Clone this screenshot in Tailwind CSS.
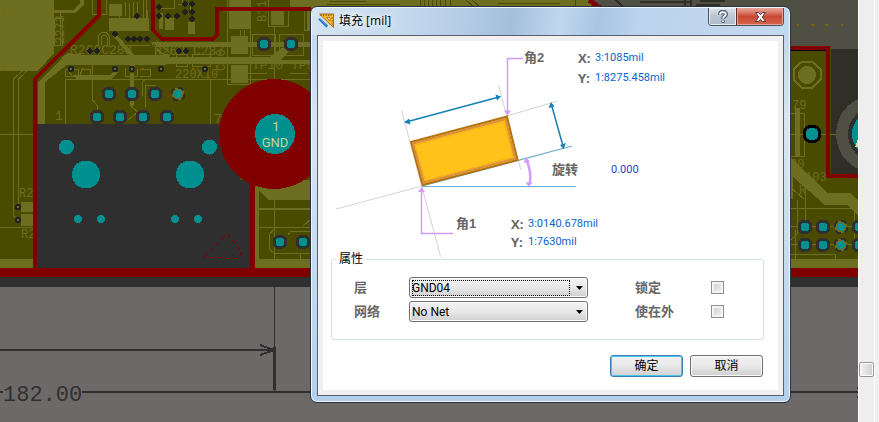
<!DOCTYPE html>
<html lang="zh-CN">
<head>
<meta charset="utf-8">
<meta name="viewport" content="width=device-width, initial-scale=1">
<title>填充 [mil]</title>
<script src="https://cdn.jsdelivr.net/npm/@tailwindcss/browser@4"></script>
</head>
<body class="flex min-h-screen overflow-hidden bg-[#6e6969] font-['Liberation_Sans','Noto_Sans_CJK_SC',sans-serif] text-[12px] text-black">
<main class="relative flex-1 overflow-hidden bg-[#6e6969]">
  <!-- board canvas -->
  <svg class="absolute inset-0 h-full w-full" viewBox="0 0 858 422" preserveAspectRatio="xMinYMin slice" role="img" aria-label="PCB" shape-rendering="crispEdges">
    <defs>
      <g id="via"><circle r="7.5" fill="#2f2f2f"/><circle r="4.5" fill="#009090"/></g>
      <g id="padvia"><circle r="6.5" fill="#6e6e20" stroke="#2f2f2f" stroke-dasharray="6 4" stroke-width="2"/><circle r="4" fill="#009090"/></g>
      <g id="svia"><circle r="2" fill="#6e6e20" stroke="#222" stroke-width="2"/></g>
      <circle id="dot" r="2.6" fill="#1f1f20"/>
    </defs>
    <rect width="858" height="268" fill="#4b4b00"/>
    <!-- copper pours and traces -->
    <g fill="#6e6e20">
      <path d="M0 0H54V53L38 71H0Z"/>
      <path d="M38 82L68 53 128 60H311V64H68L45 82V124H38Z"/>
      <rect x="109" y="4" width="13" height="12"/><rect x="109" y="18" width="40" height="13"/>
      <path d="M64 55H170L166 65H58Z"/><path d="M150 42H311V47H158Z"/><path d="M150 57H270L286 45 291 49 276 64H150Z"/>
      <path d="M118 36L135 56V68H130V56L113 36Z"/>
      <rect x="229" y="0" width="22" height="29"/><rect x="231" y="36" width="17" height="18"/><rect x="231" y="65" width="17" height="18"/>
      <rect x="271" y="8" width="13" height="17"/><rect x="307" y="0" width="4" height="30"/>
      <rect x="130" y="73" width="4" height="33"/><path d="M70 75H110L115 70 118 73 111 79H76L69 72Z"/>
      <path d="M54 10H74L80 3V0H84V4L76 13H54Z"/>
      <rect x="255" y="180" width="56" height="88"/><rect y="259" width="33" height="9"/>
      <rect x="21" y="203" width="12" height="9"/><rect x="21" y="214" width="12" height="12"/>
      <rect x="159" y="13" width="4" height="16"/><rect x="165" y="18" width="9" height="12"/><rect x="188" y="22" width="7" height="12"/>
      <rect x="274" y="237" width="13" height="11"/>
    </g>
    <path d="M259 191L268 200H311V259H259Z" fill="#4b4b00"/>
    <g fill="none" stroke="#6e6e20">
      <path d="M13.500 216V79L22 71M18.500 210V79L27 71M0 134.500H33M0 227.500H33M65.500 124V79.500H311M92.500 57V100L97 105V112M131.500 80V107L138 112L128 120M142 96V82L146 79H240M145 107V85H156M54.500 18V45H62V18ZM60 13V45M92 0V14H106V0M113 30H150M124 45H150"/>
      <path d="M111 18V31M115 18V31M119 16V31M123 18V31M127 18V31M131 18V31M135 18V31M139 18V31M143 0V31M146 0V31M147 10V31M125 2V16M129 3V20M133 2V16M137 2V16M137 10V28M152 44L166 57M156 40L171 54"/>
      <path d="M98 45V36L102 32H106L109 36V47M101 45V37L103 35H105L107 37V47M65 69V76H78V69ZM125 68V76H137V69M82 69H90V76H80ZM140 69H150V76H140M176 54H187V66H176ZM192 54H210V66H192ZM210 80V124"/>
      <path d="M227.500 0V84H250V0M252 34H275V55H252ZM279 34H303V55H279ZM304 0V30H311M268 0V26H288V8M240 30V36M244 30V36M274.500 26V79M247 73H267M290 73H308M290 62H311"/>
      <path d="M258 209H311" stroke-width="2"/><path d="M258 227.500H311M274.500 200V268M274 253H311M269 249V235L274 229M303 226L311 219M288 235L291 231H311M300 254V259M269 249L274 253"/>
      <path d="M21 202H33M13 216L20 219M160 8H174V0M178 4H190V12M182 4V0"/>
    </g>
    <g fill="#6e6e20" font-family="Liberation Mono, monospace">
      <text x="70" y="54" font-size="13">R268C288</text><text x="154" y="55" font-size="13">R268 C287</text>
      <text x="252" y="69" font-size="13">TP10 TP9</text><text x="55" y="120" font-size="13">1</text><text x="214" y="123" font-size="13">7</text>
      <text x="175" y="78" font-size="12">220X10</text><text x="19" y="197" font-size="12">R2</text><text x="21" y="238" font-size="12">R2</text>
      <text transform="translate(64 44) rotate(-90)" font-size="12">2273</text><text transform="translate(225 71) rotate(-90)" font-size="12">C10</text><text transform="translate(266 22) rotate(-90)" font-size="12">B11</text>
      <text transform="translate(225 13) rotate(-90)" font-size="12">2</text>
    </g>
    <path d="M3 10.500h2M49 10.500h2M3 66.500h2M37 66.500h2M82 68.500h2M142 68.500h2M192 68.500h2" stroke="#806000" stroke-width="2"/>
    <!-- strip along the top edge -->
    <rect x="290" width="303" height="8" fill="#6e6e20"/>
    <path d="M330 1H366M327 4H400M420 0V8M424 0V8M428 0V8M432 0V8M436 0V8M440 0V8M445 0V8M450 0V8M466 0L475 8M472 0L481 8M498 3H560M540 6H592M575 0V8" stroke="#4b4b00" fill="none"/>
    <path d="M592 0H858V49H592Z" fill="#4f4f44"/>
    <path d="M616 0L624 8M640 2H690M685 0V8M691 0V8M700 1H725M696 5H720" stroke="#2f2f27" stroke-width="2"/>
    <path d="M589 0L600 8" stroke="#800000" stroke-width="5"/>
    <!-- right section of the board -->
    <rect x="790" y="51" width="37" height="217" fill="#4b4b00"/>
    <path d="M790 50.500H826" stroke="#000"/>
    <rect x="831" y="49" width="27" height="125" fill="#2f2f27"/>
    <path d="M797 24.500h2M811 24.500h3M825 24.500h3M841 24.500h2" stroke="#806000" stroke-width="2"/>
    <path d="M802 61.500H812L820.500 69.500V79.500L812 88H802L793.500 79.500V69.500Z" fill="none" stroke="#6e6e20" stroke-width="2"/>
    <circle cx="807" cy="75" r="9" fill="#6e6e20"/>
    <g fill="#6e6e20">
      <rect x="795" y="108" width="5" height="48"/>
      <path d="M790 157L828 193H850L858 200V216L848 205H825L793 177V199H790Z"/>
      <rect x="790" y="259" width="68" height="9"/>
      <g font-family="Liberation Mono, monospace" font-size="12"><text x="792" y="109">79</text><text x="790" y="168">80</text><text x="805" y="181">103</text><text x="799" y="194">R</text></g>
    </g>
    <path d="M791 113H804V156H791M790 134.500H836M805 185V220M790 208.500H858M790 254.500H835V259M795 230V260M790 187L804 199M797 200V234L790 241M854 212V250M790 226.500H858M790 244.500H858" fill="none" stroke="#6e6e20"/>
    <circle cx="875" cy="134" r="39" fill="#4f4f44"/><circle cx="875" cy="134" r="27" fill="#2f2f2f"/><circle cx="875" cy="134" r="23" fill="#009090"/>
    <path d="M858 139L855 147H858" fill="#d8dda0"/>
    <path d="M790 48H828V176H858" fill="none" stroke="#800000" stroke-width="4"/>
    <circle cx="812" cy="134" r="8" fill="#009090" stroke="#000" stroke-width="3"/>
    <use href="#via" x="805" y="227"/><use href="#via" x="823" y="227"/><use href="#padvia" x="841" y="227"/><use href="#via" x="859" y="227"/>
    <use href="#via" x="805" y="245"/><use href="#via" x="823" y="245"/><use href="#padvia" x="841" y="245"/><use href="#via" x="859" y="245"/>
    <!-- connector body -->
    <path d="M37 124H240V180H250V268H37Z" fill="#2f2f2f"/>
    <path d="M98.500 0V16L35 79V272" fill="none" stroke="#800000" stroke-width="4"/>
    <path d="M153 0V30L162 39H213L217 35V9H311" fill="none" stroke="#800000" stroke-width="4"/>
    <path d="M252.500 170V270" stroke="#800000" stroke-width="5"/>
    <circle cx="274" cy="134" r="55" fill="#800000"/><circle cx="275" cy="134" r="20" fill="#009090"/>
    <g fill="#c6d795" text-anchor="middle" font-family="Roboto, sans-serif" font-size="13"><text x="276" y="131">1</text><text x="275" y="147">GND</text></g>
    <g fill="#009090"><circle cx="66.500" cy="147" r="7.500"/><circle cx="209.500" cy="147" r="7.500"/><circle cx="86" cy="174.500" r="14"/><circle cx="190" cy="174.500" r="14"/><circle cx="78" cy="219" r="3.800"/><circle cx="101" cy="219" r="3.800"/><circle cx="175" cy="219" r="3.800"/><circle cx="198" cy="219" r="3.800"/></g>
    <path d="M204 257L227 234L242 252L237 259Z" fill="none" stroke="#800000" stroke-dasharray="5 3"/>
    <use href="#via" x="109" y="94"/><use href="#via" x="132" y="94"/><use href="#via" x="155" y="94"/><use href="#padvia" x="178" y="94"/>
    <use href="#via" x="97" y="117"/><use href="#via" x="120" y="117"/><use href="#via" x="143" y="117"/><use href="#via" x="167" y="117"/>
    <use href="#via" x="264" y="44"/><use href="#via" x="291" y="44"/><use href="#via" x="280" y="242"/><use href="#via" x="303" y="242"/>
    <use href="#svia" x="71" y="69"/><use href="#svia" x="115" y="69"/><use href="#svia" x="132" y="69"/><use href="#svia" x="161" y="69"/><use href="#svia" x="205" y="69"/><use href="#svia" x="18" y="207"/><use href="#svia" x="18" y="220"/>
    <use href="#dot" x="115" y="34"/><use href="#dot" x="137" y="16"/><use href="#dot" x="128" y="39"/><use href="#dot" x="134" y="39"/><use href="#dot" x="140" y="39"/><use href="#dot" x="147" y="39"/><use href="#dot" x="90" y="51"/><use href="#dot" x="97" y="51"/><use href="#dot" x="179" y="51"/><use href="#dot" x="186" y="51"/>
    <use href="#dot" x="159" y="7"/><use href="#dot" x="159" y="16"/><use href="#dot" x="168" y="16"/><use href="#dot" x="177" y="16"/><use href="#dot" x="185" y="4"/><use href="#dot" x="192" y="4"/><use href="#dot" x="185" y="12"/><use href="#dot" x="192" y="12"/><use href="#dot" x="192" y="19"/>
    <!-- board edge, sheet and dimension lines -->
    <rect y="268" width="858" height="9" fill="#800000"/><rect y="277" width="858" height="10" fill="#2f2f2f"/>
    <rect y="287" width="858" height="135" fill="#6e6969"/>
    <g fill="none" stroke="#2f2f2f"><path d="M274.500 287V391"/><path d="M274.500 347V390" stroke-width="3"/><path d="M0 350H274M260 345L274 350L260 355M0 392H3M82 392H858" stroke-width="2"/><path d="M857 388H858M857 397H858" stroke-width="2"/></g>
    <text x="3" y="401" fill="#2f2f2f" font-family="Liberation Mono, monospace" font-size="22">182.00</text>
  </svg>

  <!-- dialog window -->
  <section role="dialog" aria-labelledby="dlg-title" class="absolute top-[6px] left-[310px] flex w-[481px] flex-col rounded-[7px] border border-[#26323e] bg-linear-to-b from-[#bfd4ea] via-[#d7e6f5] via-30% to-[#b3cfeb] px-[6px] pb-[6px] shadow-[inset_0_0_0_1px_#eef6fd]">
    <header class="mx-[-5px] mt-px flex h-[27px] items-start rounded-t-[5px] bg-[linear-gradient(100deg,#d5e3f2_0%,#c6daee_18%,#b4cce5_32%,#a5bfdb_42%,#c0d7ef_52%,#a9c5e3_60%,#bbd3ec_68%,#c3d9ef_100%)] px-[5px]">
      <svg class="mt-[5px] ml-px h-4 w-4 shrink-0" viewBox="0 0 16 16" aria-hidden="true">
        <path d="M1.500 1H15.500V14.500Z" fill="#f3b929" stroke="#a86f10"/><path d="M8.500 4.500H12V8Z" fill="#eef3f8" stroke="#a86f10" stroke-width=".8"/>
        <path d="M3 1.500v1.500M5.500 1.500v1.500M8 1.500v1.500M10.500 1.500v1.500M13 1.500v1.500M15 5h-1.500M15 8h-1.500M15 11h-1.500" stroke="#70480c" stroke-width=".8"/>
        <path d="M0 6.500L2 4.700L10.300 12.500L8.500 15Z" fill="#1769b5" stroke="#e4eef8" stroke-width=".6"/><path d="M1.800 6L9.300 13" stroke="#4a9be0"/>
      </svg>
      <h1 id="dlg-title" class="ml-[5px] flex-1 pt-[4px] font-['Open_Sans','Noto_Sans_CJK_SC',sans-serif] text-[12px] leading-[18px] [text-shadow:0_0_6px_#fff,0_0_8px_#fff]">填充 [mil]</h1>
      <div class="flex h-[18px] overflow-hidden rounded-b-[4px] border border-t-0 border-[#47525e] text-white">
        <button type="button" aria-label="帮助" class="flex w-[28px] items-center justify-center border-r border-[#5d2b28] bg-linear-to-b from-[#dde6ef] via-[#bcc8d5] via-45% to-[#aebccb] shadow-[inset_0_0_0_1px_#e7edf3]">
          <svg class="h-[13px] w-[10px]" viewBox="0 0 10 13" aria-hidden="true"><path d="M2 4.500C2 1 8 1 8 4.200C8 6.500 5 6 5 8.700" fill="none" stroke="#4e5a6c" stroke-width="4"/><circle cx="5" cy="11.200" r="1.800" fill="#4e5a6c"/><path d="M2 4.200C2.200 1.300 7.800 1.400 7.800 4.200C7.800 6.400 5 6 5 8.500M5 10.300V12" fill="none" stroke="#fff" stroke-width="1.800"/></svg>
        </button>
        <button type="button" aria-label="关闭" class="flex w-[46px] items-center justify-center bg-linear-to-b from-[#e6aaa0] via-[#c94832] via-50% to-[#d5664c] shadow-[inset_0_0_0_1px_#e6a198]">
          <svg class="h-[12px] w-[13px]" viewBox="0 0 13 12" aria-hidden="true"><path d="M1.500 1.500H4.500L6.500 3.800L8.500 1.500H11.500L8.300 6L11.500 10.500H8.500L6.500 8.200L4.500 10.500H1.500L4.700 6Z" fill="#fff" stroke="#563c43"/></svg>
        </button>
      </div>
    </header>

    <div class="border border-[#56616d] bg-[#f0f0f0] p-[5px]">
      <form class="bg-white pb-[13px]" onsubmit="return false">
        <!-- geometry diagram -->
        <div class="relative h-[209px] font-['Liberation_Sans','Noto_Sans_CJK_SC',sans-serif] text-[13px] leading-[18px] font-bold text-[#666]">
          <svg class="absolute inset-0 h-[218px] w-full" viewBox="323 41 455 218" preserveAspectRatio="xMinYMin meet" aria-hidden="true">
            <g fill="none" stroke="#d4d4d4"><path d="M401.500 110L440.500 256.500M498.500 85L521 170M336 209L422 186M507 116L558 101"/></g>
            <path d="M422 186L572 146" fill="none" stroke="#67abc8" stroke-width="1.200"/>
            <path d="M422 186.500H575.500" fill="none" stroke="#67b4d4"/>
            <path d="M411 142L507 116.500L517.500 160L422.500 185Z" fill="#ffc21a" stroke="#b5730f" stroke-width="2"/>
            <path d="M413 143.500L505.500 119L515 158.500L424 182.500Z" fill="none" stroke="#d98e40" stroke-width="2"/>
            <path d="M415 145L504.500 121.500L513 157L425.500 180.500Z" fill="none" stroke="#f5b01c"/>
            <g fill="none" stroke="#1480b5" stroke-width="1.500"><path d="M406 122L499 97M551.500 105L563 146"/></g>
            <g fill="#1480b5"><path d="M404 122.500L409 118.500L410.500 124.500ZM501 96.500L495.500 94.500L497 100.500ZM551 102L548.500 108L554.500 106.500ZM563.500 149L560 145L566 143Z"/></g>
            <path d="M523 58.500H507.500V111M453 233.500H421.500V190" fill="none" stroke="#d09cff" stroke-width="1.500"/>
            <path d="M527 161Q532 174 529.500 184" fill="none" stroke="#d09cff" stroke-width="2.500"/>
            <path d="M507.500 115.500L504 110.500H511ZM421.500 187L418 192H425ZM526 157.500L523.500 163L530 161.500ZM529 187L525.500 182.500L532.500 182Z" fill="#d09cff"/>
          </svg>
          <span class="absolute top-[8px] left-[201px]">角2</span>
          <div class="absolute top-[8px] left-[255px] grid grid-cols-[17px_auto] gap-y-[2px] font-['Open_Sans',sans-serif]">
            <span>X:</span><output class="font-['Roboto',sans-serif] text-[11px] font-normal text-[#0b62cd]">3:1085mil</output>
            <span>Y:</span><output class="font-['Roboto',sans-serif] text-[11px] font-normal text-[#0b62cd]">1:8275.458mil</output>
          </div>
          <span class="absolute top-[120px] left-[229px]">旋转</span>
          <output class="absolute top-[120px] left-[288px] font-['Roboto',sans-serif] text-[11px] font-normal text-[#2a3fc8]">0.000</output>
          <span class="absolute top-[174px] left-[133px]">角1</span>
          <div class="absolute top-[174px] left-[188px] grid grid-cols-[17px_auto] font-['Open_Sans',sans-serif]">
            <span>X:</span><output class="font-['Roboto',sans-serif] text-[11px] font-normal text-[#0b62cd]">3:0140.678mil</output>
            <span>Y:</span><output class="font-['Roboto',sans-serif] text-[11px] font-normal text-[#0b62cd]">1:7630mil</output>
          </div>
        </div>

        <fieldset class="mr-[14px] ml-[8px] rounded-[3px] border border-[#d5dfe5] pr-[39px] pb-[17px] pl-[22px]">
          <legend class="-ml-[18px] px-[3px] text-[12px] leading-[18px]">属性</legend>
          <div class="grid grid-cols-[55px_179px_1fr_13px] items-center gap-y-[3px] pt-[9px] text-[13px] leading-[21px] font-bold text-[#666]">
            <label for="layer">层</label>
            <div class="relative">
              <select id="layer" class="block h-[21px] w-full appearance-none rounded-[3px] border border-[#707070] bg-linear-to-b from-[#f3f3f3] via-[#e8e8e8] to-[#cfcfcf] px-[2px] font-['Roboto',sans-serif] text-[12px] leading-[18px] font-normal text-black shadow-[inset_0_0_0_1px_#fafafa] outline-none"><option>GND04</option></select>
              <span class="pointer-events-none absolute top-[3px] right-[18px] bottom-[2px] left-[3px] border border-dotted border-black"></span>
              <svg class="pointer-events-none absolute top-[9px] right-[5px] h-[4px] w-[7px]" viewBox="0 0 7 4" aria-hidden="true"><path d="M0 0H7L3.500 4Z"/></svg>
            </div>
            <label for="locked" class="pl-[47px]">锁定</label>
            <input id="locked" type="checkbox" class="h-[13px] w-[13px] appearance-none border border-[#8e8f8f] bg-linear-to-br from-[#c5cad2] to-[#f6f6f6] shadow-[inset_0_0_0_2px_#f4f4f4] checked:bg-[#4a6ea8]">
            <label for="net">网络</label>
            <div class="relative">
              <select id="net" class="block h-[21px] w-full appearance-none rounded-[3px] border border-[#707070] bg-linear-to-b from-[#f3f3f3] via-[#e8e8e8] to-[#cfcfcf] px-[2px] font-['Roboto',sans-serif] text-[12px] leading-[18px] font-normal text-black shadow-[inset_0_0_0_1px_#fafafa] outline-none"><option>No Net</option></select>
              <svg class="pointer-events-none absolute top-[9px] right-[5px] h-[4px] w-[7px]" viewBox="0 0 7 4" aria-hidden="true"><path d="M0 0H7L3.500 4Z"/></svg>
            </div>
            <label for="keepout" class="pl-[47px]">使在外</label>
            <input id="keepout" type="checkbox" class="h-[13px] w-[13px] appearance-none border border-[#8e8f8f] bg-linear-to-br from-[#c5cad2] to-[#f6f6f6] shadow-[inset_0_0_0_2px_#f4f4f4] checked:bg-[#4a6ea8]">
          </div>
        </fieldset>

        <div class="mt-[15px] mr-[15px] flex justify-end gap-[7px]">
          <button type="submit" class="h-[22px] w-[73px] rounded-[3px] border border-[#3c7fb1] bg-linear-to-b from-[#f2f2f2] via-[#e8e8e8] to-[#cfcfcf] text-[12px] leading-[18px] shadow-[inset_0_0_0_1px_#48c8ee]">确定</button>
          <button type="button" class="h-[22px] w-[73px] rounded-[3px] border border-[#707070] bg-linear-to-b from-[#f2f2f2] via-[#e8e8e8] to-[#cfcfcf] text-[12px] leading-[18px] shadow-[inset_0_0_0_1px_#fafafa]">取消</button>
        </div>
      </form>
    </div>
  </section>
</main>
<!-- vertical scroll track -->
<aside class="flex w-[21px] shrink-0 flex-col border-l border-white bg-[#f0f0f0] pr-[4px]">
  <div class="relative flex-1 border-r border-white bg-[#eeeeee]">
    <div role="scrollbar" aria-orientation="vertical" aria-valuenow="88" class="absolute top-[362px] left-0 h-[15px] w-[15px] rounded-[2px] border border-[#959595] bg-linear-to-r from-[#f3f3f3] to-[#cecece] shadow-[inset_0_0_0_1px_#fff]"></div>
  </div>
</aside>
</body>
</html>
